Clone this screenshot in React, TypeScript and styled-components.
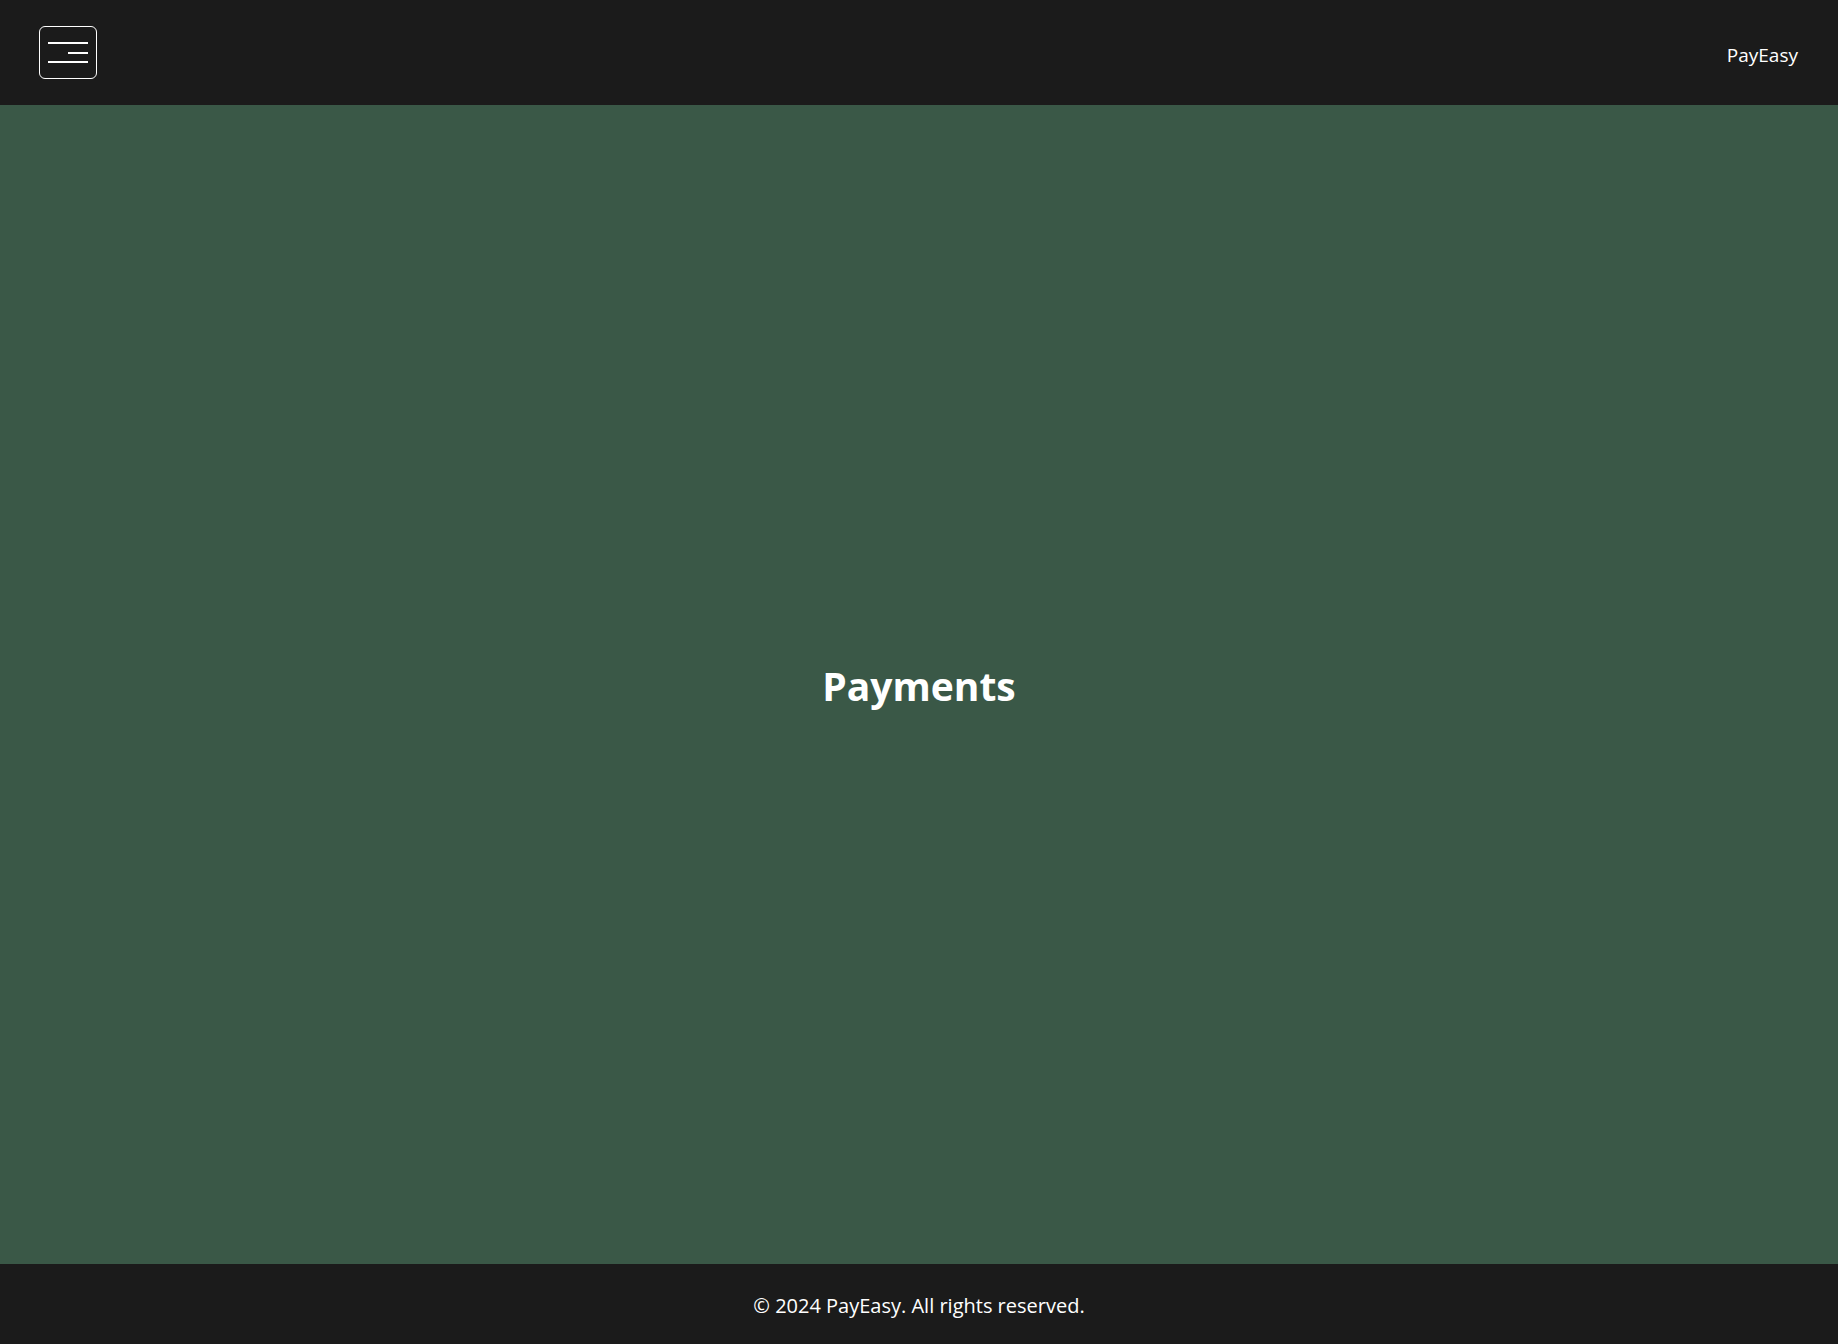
import React from "react";
import styled, { createGlobalStyle } from "styled-components";

const GlobalStyle = createGlobalStyle`
  html, body {
    margin: 0;
    padding: 0;
    height: 100%;
  }
  body {
    font-family: "Open Sans", "Noto Sans", sans-serif;
    background: #1b1b1b;
    color: #ffffff;
  }
  #root {
    height: 100%;
  }
`;

const Page = styled.div`
  display: flex;
  flex-direction: column;
  height: 100vh;
`;

const Header = styled.header`
  height: 105px;
  flex: none;
  background: #1b1b1b;
  display: flex;
  align-items: center;
  justify-content: space-between;
  padding: 0 40px 0 39px;
  box-sizing: border-box;
`;

const MenuButton = styled.button`
  width: 58px;
  height: 53px;
  box-sizing: border-box;
  background: transparent;
  border: 1px solid #ffffff;
  border-radius: 6px;
  padding: 0;
  display: flex;
  align-items: center;
  justify-content: center;
  cursor: pointer;
`;

const Brand = styled.span`
  font-size: 19px;
  color: #ffffff;
  margin-top: 4px;
`;

const Main = styled.main`
  flex: 1;
  background: #3a5847;
  display: flex;
  align-items: center;
  justify-content: center;
`;

const Title = styled.h1`
  margin: 0;
  font-size: 39px;
  font-weight: 700;
  color: #ffffff;
  padding-top: 2px;
`;

const Footer = styled.footer`
  height: 80px;
  flex: none;
  background: #1b1b1b;
  display: flex;
  align-items: center;
  justify-content: center;
  font-size: 20px;
  color: #ffffff;
  padding-top: 2px;
  box-sizing: border-box;
`;

export default function App() {
  return (
    <>
      <GlobalStyle />
      <Page>
        <Header>
          <MenuButton aria-label="Menu">
            <svg width="40" height="22" viewBox="0 0 40 22">
              <rect x="0" y="0" width="40" height="2" fill="#ffffff" />
              <rect x="20" y="10" width="20" height="2" fill="#ffffff" />
              <rect x="0" y="19" width="40" height="2" fill="#ffffff" />
            </svg>
          </MenuButton>
          <Brand>PayEasy</Brand>
        </Header>
        <Main>
          <Title>Payments</Title>
        </Main>
        <Footer>© 2024 PayEasy. All rights reserved.</Footer>
      </Page>
    </>
  );
}
